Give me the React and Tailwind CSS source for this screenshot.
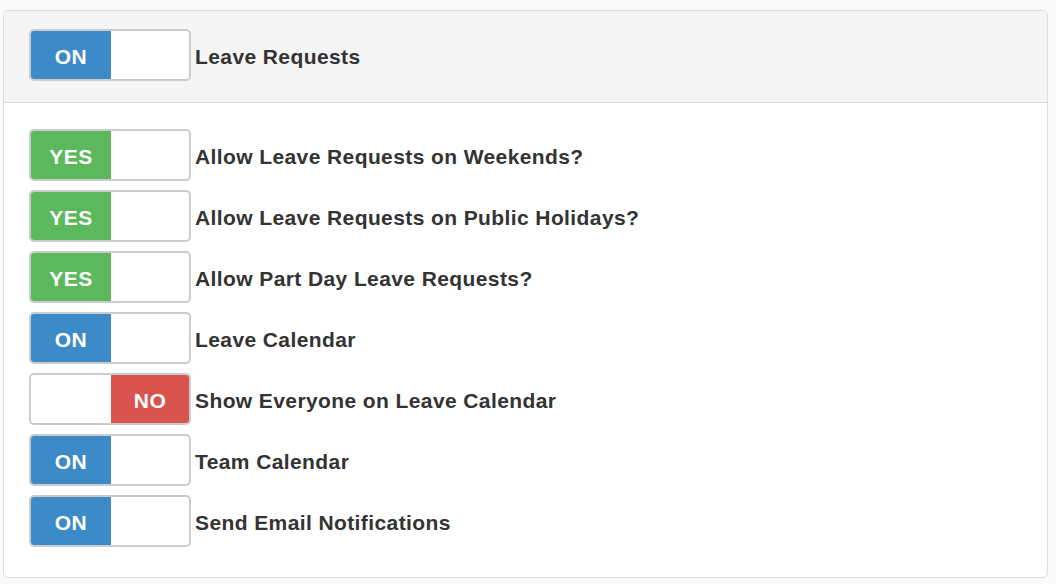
import React from 'react'

const rows = [
  { label: 'Allow Leave Requests on Weekends?', on: true, text: 'YES', color: 'green' },
  { label: 'Allow Leave Requests on Public Holidays?', on: true, text: 'YES', color: 'green' },
  { label: 'Allow Part Day Leave Requests?', on: true, text: 'YES', color: 'green' },
  { label: 'Leave Calendar', on: true, text: 'ON', color: 'blue' },
  { label: 'Show Everyone on Leave Calendar', on: false, text: 'NO', color: 'red' },
  { label: 'Team Calendar', on: true, text: 'ON', color: 'blue' },
  { label: 'Send Email Notifications', on: true, text: 'ON', color: 'blue' },
]

const colors = {
  blue: 'bg-[#3d8ac8]',
  green: 'bg-[#5cb85c]',
  red: 'bg-[#d9534f]',
}

function Switch({ on, text, color }) {
  const knob = `flex items-center justify-center pt-[3px] text-[21px] font-bold tracking-[0.5px] text-white ${colors[color]}`
  return (
    <div className="flex h-[52px] w-[162px] shrink-0 overflow-hidden rounded-[5px] border-2 border-[#cccccc] bg-white">
      {on ? (
        <>
          <div className={`w-[80px] ${knob}`}>{text}</div>
          <div className="flex-1" />
        </>
      ) : (
        <>
          <div className="w-[80px]" />
          <div className={`flex-1 ${knob}`}>{text}</div>
        </>
      )}
    </div>
  )
}

export default function App() {
  return (
    <div className="h-[584px] w-[1056px] bg-[#fafafa] pl-[3px] pt-[10px] font-['Liberation_Sans',Arial,sans-serif] text-[#333333]">
      <div className="w-[1045px] overflow-hidden rounded-[5px] border border-[#dddddd] bg-white">
        <div className="flex items-center gap-[4px] border-b border-[#dddddd] bg-[#f5f5f5] pb-[21px] pl-[25px] pt-[18px]">
          <Switch on text="ON" color="blue" />
          <span className="pt-[3px] text-[21px] font-bold tracking-[0.4px]">Leave Requests</span>
        </div>
        <div className="flex flex-col gap-[9px] pb-[30px] pl-[25px] pt-[26px]">
          {rows.map((r) => (
            <div key={r.label} className="flex items-center gap-[4px]">
              <Switch on={r.on} text={r.text} color={r.color} />
              <span className="pt-[3px] text-[21px] font-bold tracking-[0.4px]">{r.label}</span>
            </div>
          ))}
        </div>
      </div>
    </div>
  )
}
